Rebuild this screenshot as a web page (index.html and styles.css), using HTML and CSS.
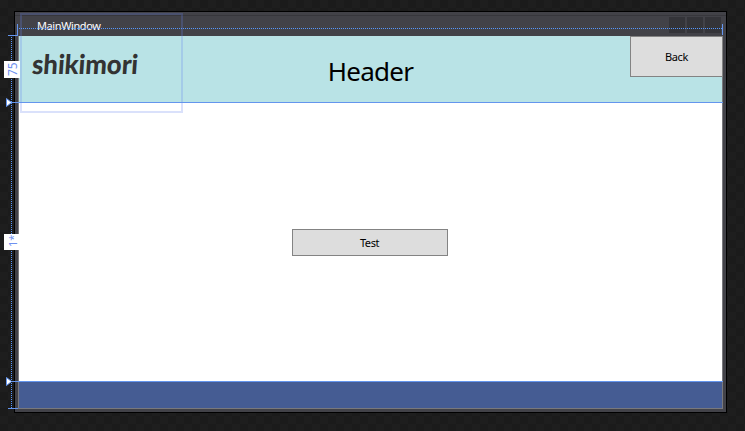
FILE: index.html
```html
<!DOCTYPE html>
<html lang="en">
<head>
<meta charset="utf-8">
<title>MainWindow</title>
<link rel="stylesheet" href="styles.css">
</head>
<body>
<main class="designer">
  <section class="window">
    <div class="titlebar">
      <span class="title">MainWindow</span>
      <div class="captions"><i></i><i></i><i></i></div>
    </div>
    <div class="client">
      <header class="header">
        <svg class="logo" width="120" height="40" role="img" aria-label="shikimori"><text transform="translate(2.5 29) skewX(-4)" textLength="106" lengthAdjust="spacingAndGlyphs">shikimori</text></svg>
        <h1>Header</h1>
        <button class="back">Back</button>
      </header>
      <div class="content"><button class="test">Test</button></div>
      <footer class="footer"></footer>
    </div>
  </section>
  <svg class="guides" width="745" height="431">
    <rect class="outline" x="21" y="14" width="161" height="98"/>
    <g class="solid">
      <path d="M17.5 24V36M722.5 24V35M8 35.5H18M6 102.5H723M6 381.5H723M8 408.5H18"/>
    </g>
    <path class="dotted" d="M19 28.5H722M11.5 37V408"/>
    <path class="marker" d="M6.5 98.5V106.5L11.5 102.5ZM6.5 377.5V385.5L11.5 381.5Z"/>
    <path class="tag" d="M4 61H20V78H4ZM4 234H19V250H4Z"/>
    <text class="size" transform="translate(17 76) rotate(-90)">75</text>
    <text class="size small" transform="translate(17 247) rotate(-90)">1*</text>
  </svg>
</main>
</body>
</html>
```
FILE: styles.css
```css
* { box-sizing: border-box; }
body { margin: 0; }
.designer {
  position: relative;
  width: 745px;
  height: 431px;
  padding: 11px 0 0 14px;
  overflow: hidden;
  background: repeating-conic-gradient(#1b1b1b 0 25%, #1e1e1e 0 50%) 0 0 / 16px 16px;
  font-family: "Noto Sans", sans-serif;
}
.window {
  width: 713px;
  height: 402px;
  border: 1px solid #000;
  padding: 0 3px;
  background: #424248;
}
.titlebar {
  height: 24px;
  display: flex;
  justify-content: space-between;
  margin: 0 -3px;
  padding: 5px 5px 0 22px;
  background: linear-gradient(#424248 3px, #37373c 3px 4px, #424248 4px);
}
.title { color: #fff; font-size: 11px; line-height: 18px; letter-spacing: -.4px; }
.captions { display: flex; gap: 2px; }
.captions i { width: 16px; height: 16px; background: #343439; }
.client {
  height: 373px;
  display: flex;
  flex-direction: column;
  border: solid #78787c;
  border-width: 0 1px 1px;
}
.header {
  height: 67px;
  display: grid;
  grid-template-columns: 1fr auto 1fr;
  background: #b9e3e6;
}
.logo { margin: 9px 0 0 10px; }
.logo text {
  font: 900 27px Lato, sans-serif;
  fill: #333;
}
h1 {
  margin: 0;
  font-size: 26px;
  line-height: 70px;
  font-weight: 400;
  letter-spacing: -.7px;
  color: #000;
}
button {
  border: 1px solid #838383;
  background: #ddd;
  color: #000;
  font: 11px "Noto Sans", sans-serif;
  letter-spacing: -.4px;
  padding: 0;
}
.back { justify-self: end; width: 93px; height: 41px; margin-right: -1px; }
.content {
  flex: 1;
  display: flex;
  align-items: center;
  justify-content: center;
  padding-right: 2px;
  background: #fff;
}
.test { width: 156px; height: 27px; }
.footer { height: 27px; background: #455c93; }
.guides { position: absolute; inset: 0; pointer-events: none; }
.outline { fill: none; stroke: #6482ed; stroke-opacity: .24; stroke-width: 2; }
.solid { fill: none; stroke: #6495ed; }
.dotted { fill: none; stroke: #5597ff; stroke-dasharray: 1 1; shape-rendering: crispEdges; }
.marker { fill: #fff; stroke: #6495ed; }
.tag { fill: #fff; }
.size { font-size: 12px; fill: #6f91f0; }
.small { font-size: 11px; }
```
